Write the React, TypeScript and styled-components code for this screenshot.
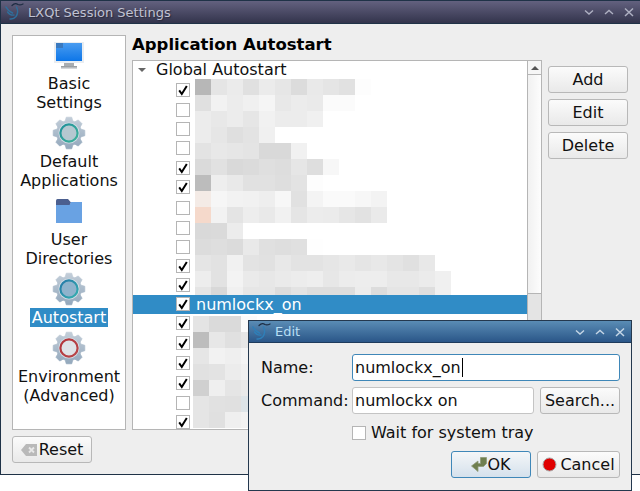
import styled, { createGlobalStyle } from "styled-components";

const GlobalStyle = createGlobalStyle`
   html, body { margin: 0; padding: 0; background: #fff; }
   body { font-family: "DejaVu Sans", sans-serif; font-size: 16px; color: #111; }
   * { box-sizing: border-box; }
`;

// blurred app names, one array per row of 16px cells
const upperCells = [
   ["b7", "e5", "eb", "e0", "eb", "e6", "dc", "e9", "e5", "e1", "fd"],
   ["e0", "f2", "ec", "f0", "f5", "e8", "ec", "ea", "fb", "fb"],
   ["ec", "e8", "ec", "e6", "f1", "ec", "ec", "f0"],
   ["ec", "e6", "df", "e3", "f0"],
   ["e3", "e8", "e6", "e4", "d9", "d9", "f1"],
   ["da", "e1", "d9", "db", "df", "dd", "e6", "de", "f7"],
   ["bc", "ee", "e9", "e1", "e1", "de", "e3", "fd"],
   ["f4ebe6", "f6", "f2", "f1", "ee", "f7", "e1", "f4", "fa", "fa", "f7", "f3"],
   ["f5d9cb", "f2", "e4", "ed", "e9", "f1", "e5", "ec", "eb", "e6", "e2", "ea"],
   ["d9", "da", "ec"],
   ["dc", "de", "db", "e9", "e0", "de", "e0", "fe"],
   ["e5", "e2", "f1", "e3", "e1", "e8", "e3", "e3", "e6", "e9", "e5", "e8", "e4", "e0", "e8"],
   ["ed", "e2", "f3", "ea", "e7", "ea", "ec", "ee", "e7", "ec", "ed", "ed", "e8", "e8", "eb", "f0"],
   ["e5", "d8", "f0", "e6", "e6", "dc", "e3", "dd", "dd", "dd", "ec", "dc", "e5", "e5", "de", "f0"],
];

const lowerCells = [
   ["e4", "da", "da", "fb"],
   ["bd", "e7", "e0", "e6"],
   ["e6", "f2", "ef", "f4"],
   ["e1", "e3", "ec", "f0"],
   ["d0", "ef", "e5", "e9"],
   ["e5", "e1", "e0", "dde4e8"],
   ["e5", "e0", "ef", "f2"],
];

// row height and checkbox state, top to bottom
const rows = [
   { h: 20, on: true }, { h: 19, on: false }, { h: 19, on: false }, { h: 20, on: false },
   { h: 19, on: true }, { h: 21, on: true }, { h: 20, on: false }, { h: 19, on: false },
   { h: 19, on: false }, { h: 19, on: true }, { h: 19, on: true },
   { h: 19, on: true, label: "numlockx_on" },
   { h: 20, on: true }, { h: 20, on: true }, { h: 20, on: true }, { h: 20, on: true },
   { h: 19, on: false }, { h: 19, on: true },
];

function Mosaic({ cells, clipH }: { cells: string[][]; clipH: number }) {
   const width = Math.max(...cells.map(r => r.length)) * 16;
   return (
      <svg width={width} height={clipH} viewBox={`0 0 ${width} ${clipH}`} shapeRendering="crispEdges">
         {cells.map((row, y) => row.map((c, x) => (
            <rect key={`${x}-${y}`} x={x * 16} y={y * 16} width={16} height={16} fill={c.length === 2 ? `#${c}${c}${c}` : `#${c}`} />
         )))}
      </svg>
   );
}

function gearPath(cx: number, cy: number, outer: number, inner: number) {
   const pts: string[] = [];
   for (let i = 0; i < 8; i++) {
      const a = (i * Math.PI) / 4;
      const w = 0.2;
      [[inner, a - 0.3], [outer, a - w + 0.03], [outer, a + w - 0.03], [inner, a + 0.3]].forEach(([r, t]) => {
         pts.push(`${(cx + r * Math.sin(t)).toFixed(2)} ${(cy - r * Math.cos(t)).toFixed(2)}`);
      });
   }
   return `M${pts.join("L")}Z`;
}

function GearIcon({ id, ringA, ringB, center }: { id: string; ringA: string; ringB: string; center: string }) {
   return (
      <svg width="34" height="34" viewBox="0 0 34 34">
         <defs>
            <linearGradient id={`${id}-body`} x1="0" y1="0" x2="0" y2="1">
               <stop offset="0" stopColor="#c3ced9" />
               <stop offset="1" stopColor="#93a8bc" />
            </linearGradient>
            <linearGradient id={`${id}-ring`} x1="0" y1="0" x2="1" y2="1">
               <stop offset="0" stopColor={ringA} />
               <stop offset="1" stopColor={ringB} />
            </linearGradient>
         </defs>
         <path d={gearPath(17, 17, 16, 12.6)} fill={`url(#${id}-body)`} stroke={`url(#${id}-body)`} strokeWidth="0.8" strokeLinejoin="round" />
         <circle cx="17" cy="17" r="10.5" fill="#d3dde5" />
         <circle cx="17" cy="17" r="8.6" fill={center} stroke={`url(#${id}-ring)`} strokeWidth="2.2" />
      </svg>
   );
}

function MonitorIcon() {
   return (
      <svg width="32" height="30" viewBox="0 0 32 30">
         <defs>
            <linearGradient id="screen" x1="0" y1="0" x2="0" y2="1">
               <stop offset="0" stopColor="#4a9cf0" />
               <stop offset="1" stopColor="#0d76e8" />
            </linearGradient>
            <linearGradient id="stand" x1="0" y1="0" x2="0" y2="1">
               <stop offset="0" stopColor="#8c9196" />
               <stop offset="1" stopColor="#e4e6e8" />
            </linearGradient>
         </defs>
         <rect x="1" y="2" width="30" height="21" fill="#e9edf1" />
         <rect x="3" y="3" width="26" height="18" fill="url(#screen)" />
         <rect x="3" y="3" width="7" height="5" fill="#3a79bf" />
         <rect x="11" y="23" width="10" height="3" fill="#a9adb1" />
         <rect x="8" y="26" width="16" height="3" fill="url(#stand)" />
      </svg>
   );
}

function FolderIcon() {
   return (
      <svg width="26" height="24" viewBox="0 0 26 24">
         <path d="M0 1.5Q0 0 1.5 0H12L15 3.500L14 6H0Z" fill="#4b5f8f" />
         <path d="M0 6H13.500L15 3H26V24H0Z" fill="#69a2e3" />
      </svg>
   );
}

function BirdLogo({ light }: { light?: boolean }) {
   const main = light ? "#2f7fb8" : "#2f6f9c";
   return (
      <svg width="20" height="20" viewBox="0 0 20 20" fill="none" strokeLinecap="round">
         <path d="M7 3.500Q10 0.500 13 2.500Q15 3.500 18 2" stroke="#1d2c42" strokeWidth="1.2" />
         <path d="M1 5Q3 9 7.500 11" stroke={main} strokeWidth="1.6" />
         <path d="M2.500 10Q5 13.500 9 13" stroke={main} strokeWidth="1.3" />
         <path d="M11.500 5Q14 10 11 14.500Q8.500 17.500 5 17" stroke={main} strokeWidth="1.4" />
      </svg>
   );
}

function CheckMark() {
   return (
      <svg width="12" height="12" viewBox="0 0 12 12">
         <path d="M2.200 6.400L4.800 10L9.800 2" fill="none" stroke="#000" strokeWidth="2" />
      </svg>
   );
}

function WindowControls({ color }: { color: string }) {
   return (
      <Controls>
         <svg width="12" height="12" viewBox="0 0 12 12" fill="none" stroke={color} strokeWidth="1.4"><path d="M2 4.500L6 8L10 4.500" /></svg>
         <svg width="12" height="12" viewBox="0 0 12 12" fill="none" stroke={color} strokeWidth="1.4"><path d="M2 8L6 4.500L10 8" /></svg>
         <svg width="12" height="12" viewBox="0 0 12 12" fill="none" stroke={color} strokeWidth="1.5"><path d="M2 2.500L10 10M10 2.500L2 10" /></svg>
      </Controls>
   );
}

export default function App() {
   return (
      <>
         <GlobalStyle />
         <Page>
            <MainWindow>
               <TitleBar>
                  <BirdLogo />
                  <TitleText>LXQt Session Settings</TitleText>
                  <WindowControls color="#aeb0c2" />
               </TitleBar>
               <Body>
                  <Columns>
                     <Sidebar>
                        <NavItem>
                           <NavIcon><MonitorIcon /></NavIcon>
                           <NavLabel>Basic<br />Settings</NavLabel>
                        </NavItem>
                        <NavItem>
                           <NavIcon><GearIcon id="g1" ringA="#1f8f9a" ringB="#3fb39a" center="#b4c8d0" /></NavIcon>
                           <NavLabel>Default<br />Applications</NavLabel>
                        </NavItem>
                        <NavItem>
                           <NavIcon><FolderIcon /></NavIcon>
                           <NavLabel>User<br />Directories</NavLabel>
                        </NavItem>
                        <NavItem>
                           <NavIcon><GearIcon id="g2" ringA="#2578a8" ringB="#35b0b0" center="#8fb3cc" /></NavIcon>
                           <NavLabel $active>Autostart</NavLabel>
                        </NavItem>
                        <NavItem>
                           <NavIcon><GearIcon id="g3" ringA="#b3343a" ringB="#b8474a" center="#dfe3e7" /></NavIcon>
                           <NavLabel>Environment<br />(Advanced)</NavLabel>
                        </NavItem>
                     </Sidebar>
                     <MainColumn>
                        <Heading>Application Autostart</Heading>
                        <Tree>
                           <TreeList>
                              <GroupRow><Expander />Global Autostart</GroupRow>
                              {rows.map((r, i) => (
                                 <TreeRow key={i} $h={r.h} $selected={!!r.label}>
                                    <CheckBox>{r.on && <CheckMark />}</CheckBox>
                                    {r.label && <RowText>{r.label}</RowText>}
                                 </TreeRow>
                              ))}
                              <UpperBlur><Mosaic cells={upperCells} clipH={216} /></UpperBlur>
                              <LowerBlur><Mosaic cells={lowerCells} clipH={112} /></LowerBlur>
                           </TreeList>
                           <ScrollBar>
                              <ScrollUp />
                              <ScrollThumb />
                           </ScrollBar>
                        </Tree>
                     </MainColumn>
                     <ButtonColumn>
                        <Button>Add</Button>
                        <Button>Edit</Button>
                        <Button>Delete</Button>
                     </ButtonColumn>
                  </Columns>
                  <Footer>
                     <Button>
                        <svg width="16" height="12" viewBox="0 0 16 12"><path d="M5 0H16V12H5L0 6Z" fill="#b9b9b9" /><path d="M8 3.500L13 8.500M13 3.500L8 8.500" stroke="#e8e8e8" strokeWidth="1.800" /></svg>
                        <ResetLabel>Reset</ResetLabel>
                     </Button>
                  </Footer>
               </Body>
            </MainWindow>

            <Dialog>
               <DialogTitleBar>
                  <BirdLogo light />
                  <DialogTitle>Edit</DialogTitle>
                  <WindowControls color="#c5d6e6" />
               </DialogTitleBar>
               <DialogBody>
                  <FormLabel>Name:</FormLabel>
                  <Field $focus>numlockx_on<Caret /></Field>
                  <FormLabel>Command:</FormLabel>
                  <FieldRow>
                     <Field>numlockx on</Field>
                     <Button>Search...</Button>
                  </FieldRow>
                  <CheckLine><CheckBox />Wait for system tray</CheckLine>
                  <DialogActions>
                     <Button $primary>
                        <svg width="16" height="15" viewBox="0 0 16 15"><path d="M9.500 0.500H15.500V6.500L12.500 9.500H7V14.500L0.500 9L7 4V6.500H9.500Z" fill="#6f7f4f" stroke="#8f9a78" strokeWidth="0.8" /></svg>
                        OK
                     </Button>
                     <Button>
                        <svg width="15" height="15" viewBox="0 0 15 15"><circle cx="7.500" cy="7.500" r="6.500" fill="#e00000" stroke="#a9a4a4" /></svg>
                        <CancelLabel>Cancel</CancelLabel>
                     </Button>
                  </DialogActions>
               </DialogBody>
            </Dialog>
         </Page>
      </>
   );
}

const Page = styled.div`
   position: relative;
   width: 640px;
   height: 491px;
   overflow: hidden;
`;

const MainWindow = styled.div`
   width: 640px;
   height: 475px;
   border: 1px solid #1f3247;
   border-right: none;
   display: flex;
   flex-direction: column;
   background: #eeeeee;
`;

const TitleBar = styled.div`
   height: 22px;
   padding: 0 5px 0 4px;
   display: flex;
   align-items: center;
   background: linear-gradient(#63617f, #33344c);
`;

const TitleText = styled.span`
   margin-left: 3px;
   flex: 1;
   font-size: 13px;
   color: #c0c2d2;
   text-shadow: 1px 1px 1px #2a2a3c;
`;

const Controls = styled.div`
   display: flex;
   gap: 8px;
   align-items: center;
`;

const Body = styled.div`
   flex: 1;
   border-top: 1px solid #1f3247;
   padding: 11px;
   display: flex;
   flex-direction: column;
   gap: 6px;
`;

const Columns = styled.div`
   height: 395px;
   display: flex;
   gap: 6px;
`;

const Sidebar = styled.div`
   width: 114px;
   height: 395px;
   background: #fff;
   border: 1px solid #b5b5b5;
   display: flex;
   flex-direction: column;
`;

const NavItem = styled.div`
   display: flex;
   flex-direction: column;
   align-items: center;
   padding-bottom: 2px;
`;

const NavIcon = styled.div`
   height: 38px;
   display: flex;
   align-items: center;
   justify-content: center;
`;

const NavLabel = styled.div<{ $active?: boolean }>`
   line-height: 19px;
   text-align: center;
   padding: 0 2px;
   white-space: nowrap;
   ${({ $active }) => $active && "background: #308cc6; color: #fff;"}
`;

const MainColumn = styled.div`
   width: 410px;
   display: flex;
   flex-direction: column;
`;

const Heading = styled.div`
   height: 25px;
   line-height: 19px;
   font-weight: bold;
   font-size: 16.5px;
   color: #000;
`;

const Tree = styled.div`
   height: 370px;
   background: #fff;
   border: 1px solid #b5b5b5;
   display: flex;
   overflow: hidden;
`;

const TreeList = styled.div`
   position: relative;
   flex: 1;
   overflow: hidden;
`;

const GroupRow = styled.div`
   height: 20px;
   padding: 0 0 2px 5px;
   line-height: 18px;
   display: flex;
   align-items: center;
`;

const Expander = styled.span`
   width: 0;
   height: 0;
   margin-right: 10px;
   border-left: 4px solid transparent;
   border-right: 4px solid transparent;
   border-top: 4px solid #666;
`;

const TreeRow = styled.div<{ $h: number; $selected: boolean }>`
   height: ${({ $h }) => $h}px;
   padding: 2px 0 0 43px;
   display: flex;
   align-items: flex-start;
   ${({ $selected }) => $selected && "background: #308cc6; color: #fff;"}
`;

const RowText = styled.span`
   margin-left: 6px;
   line-height: 16px;
`;

const CheckBox = styled.span`
   width: 14px;
   height: 14px;
   flex: none;
   background: #fff;
   border: 1px solid #b5b5b5;
   display: flex;
   align-items: center;
   justify-content: center;
`;

const UpperBlur = styled.div`
   position: absolute;
   left: 62px;
   top: 18px;
   line-height: 0;
`;

const LowerBlur = styled.div`
   position: absolute;
   left: 60px;
   top: 255px;
   line-height: 0;
`;

const ScrollBar = styled.div`
   width: 14px;
   border-left: 1px solid #b5b5b5;
   background: #e4e4e4;
   display: flex;
   flex-direction: column;
`;

const ScrollUp = styled.div`
   height: 14px;
   background: #f6f6f6;
   border-bottom: 1px solid #b5b5b5;
   display: flex;
   align-items: center;
   justify-content: center;
   &::before {
      content: "";
      border-left: 4px solid transparent;
      border-right: 4px solid transparent;
      border-bottom: 4px solid #555;
   }
`;

const ScrollThumb = styled.div`
   height: 219px;
   background: linear-gradient(90deg, #f1f1f1, #fdfdfd);
   border-bottom: 1px solid #b5b5b5;
`;

const ButtonColumn = styled.div`
   width: 80px;
   padding-top: 31px;
   display: flex;
   flex-direction: column;
   gap: 6px;
`;

const Footer = styled.div`
   display: flex;
   width: 80px;
`;

const Button = styled.button<{ $primary?: boolean }>`
   width: 100%;
   height: 27px;
   padding: 0;
   font: inherit;
   color: #111;
   display: flex;
   align-items: center;
   justify-content: center;
   border-radius: 3px;
   border: 1px solid ${({ $primary }) => ($primary ? "#3f87b8" : "#b8b8b8")};
   background: linear-gradient(${({ $primary }) => ($primary ? "#f4f6f8, #d5e1ec" : "#fbfbfb, #e9e9e9")});
`;

const ResetLabel = styled.span`
   margin-left: 2px;
`;

const CancelLabel = styled.span`
   margin-left: 3px;
`;

const Dialog = styled.div`
   position: absolute;
   left: 248px;
   top: 320px;
   width: 384px;
   height: 171px;
   border: 1px solid #24384e;
   background: #eeeeee;
   display: flex;
   flex-direction: column;
`;

const DialogTitleBar = styled.div`
   height: 22px;
   padding: 0 5px 0 3px;
   display: flex;
   align-items: center;
   background: linear-gradient(#5a8cb5, #2a5688);
   border-bottom: 1px solid #1d3a5c;
   flex: none;
`;

const DialogTitle = styled.span`
   margin-left: 3px;
   flex: 1;
   font-size: 13px;
   color: #b8def5;
`;

const DialogBody = styled.div`
   padding: 11px 11px 0 12px;
   display: grid;
   grid-template-columns: 85px 1fr;
   column-gap: 6px;
   row-gap: 6px;
   align-items: center;
`;

const FormLabel = styled.span`
   line-height: 27px;
`;

const Field = styled.div<{ $focus?: boolean }>`
   flex: 1;
   height: 27px;
   line-height: 25px;
   padding-left: 2px;
   background: #fff;
   border-radius: 3px;
   border: 1px solid ${({ $focus }) => ($focus ? "#3f87b8" : "#c4c4c4")};
`;

const Caret = styled.span`
   display: inline-block;
   width: 1px;
   height: 19px;
   margin-left: 1px;
   vertical-align: -4px;
   background: #000;
`;

const FieldRow = styled.div`
   display: flex;
   gap: 6px;
   & > button { width: 80px; flex: none; }
`;

const CheckLine = styled.div`
   grid-column: 2;
   height: 25px;
   display: flex;
   align-items: center;
   gap: 5px;
`;

const DialogActions = styled.div`
   grid-column: 1 / 3;
   display: flex;
   justify-content: flex-end;
   gap: 6px;
   & > button:first-child { width: 80px; }
   & > button:last-child { width: 83px; }
`;
